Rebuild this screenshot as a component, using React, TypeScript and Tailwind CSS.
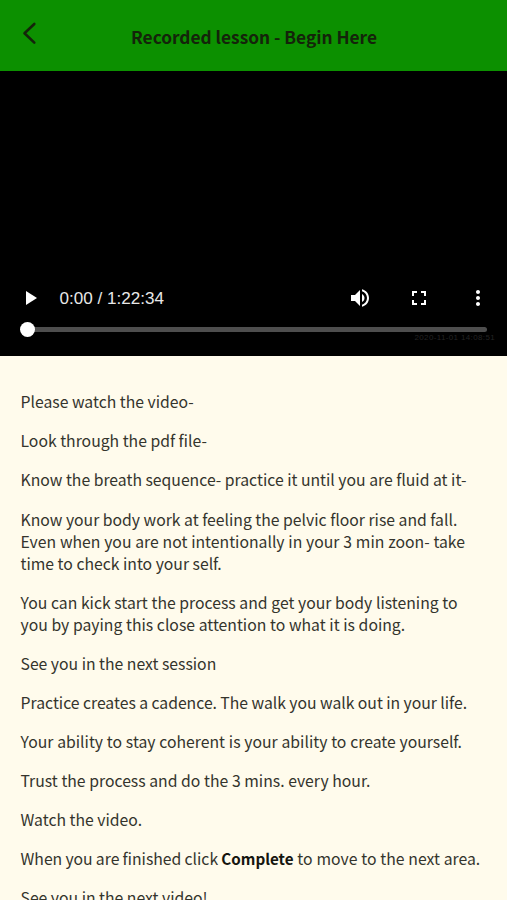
import type { ReactNode } from "react";

const paragraphs: ReactNode[] = [
  "Please watch the video-",
  "Look through the pdf file-",
  "Know the breath sequence- practice it until you are fluid at it-",
  <>
    Know your body work at feeling the pelvic floor rise and fall.
    <br />
    <span className="[word-spacing:0.27px]">Even when you are not intentionally in your 3 min zoon- take</span>
    <br />
    time to check into your self.
  </>,
  <span className="[word-spacing:0.13px]">
    You can kick start the process and get your body listening to
    <br />
    you by paying this close attention to what it is doing.
  </span>,
  "See you in the next session",
  <span className="[word-spacing:-0.15px]">Practice creates a cadence. The walk you walk out in your life.</span>,
  <span className="[word-spacing:0.27px]">Your ability to stay coherent is your ability to create yourself.</span>,
  <span className="[word-spacing:0.1px]">Trust the process and do the 3 mins. every hour.</span>,
  "Watch the video.",
  <>
    <span className="[word-spacing:-0.35px]">When you are finished click </span>
    <strong className="text-[15.2px] leading-none font-bold text-[#15150f]">Complete</strong>
    <span className="[word-spacing:0.3px]"> to move to the next area.</span>
  </>,
  "See you in the next video!",
];

const Header = () => (
  <header className="grid h-[71.4px] shrink-0 grid-cols-[60px_1fr_60px] items-center bg-[#0c9000] text-[#14240a]">
    <button aria-label="Back" className="mb-1 pl-[21px]">
      <svg width="16" height="24" viewBox="0 0 16 24" fill="none" stroke="currentColor" strokeWidth="2.6" strokeLinecap="round" strokeLinejoin="round">
        <path d="M13.3 2 3.5 11.3l9.8 9.3" />
      </svg>
    </button>
    <h1 className="pt-[2px] pl-px text-center text-[17.3px] leading-6 font-bold whitespace-nowrap">
      Recorded lesson - Begin Here
    </h1>
  </header>
);

const VideoPlayer = () => (
  <section className="relative flex h-[285px] shrink-0 flex-col justify-end bg-black pb-[19px] text-white">
    <div className="flex h-8 items-center pr-[17px] pl-[18px]">
      <button aria-label="Play">
        <svg width="24" height="24" viewBox="0 0 24 24" fill="currentColor">
          <path d="M8 5v14l11-7z" />
        </svg>
      </button>
      <span className="ml-[17.5px] pt-[2px] font-['Liberation_Sans',Arial,sans-serif] text-[17.1px] leading-5 text-[#e8e8e8]">
        0:00 / 1:22:34
      </span>
      <div className="ml-auto flex gap-[35px]">
        <button aria-label="Mute">
          <svg width="24" height="24" viewBox="0 0 24 24" fill="currentColor">
            <path d="M3 9v6h4l5 5V4L7 9H3zm13.5 3c0-1.77-1.02-3.29-2.5-4.03v8.05c1.48-.73 2.5-2.25 2.5-4.02zM14 3.23v2.06c2.89.86 5 3.54 5 6.71s-2.11 5.85-5 6.71v2.06c4.01-.91 7-4.49 7-8.77s-2.99-7.86-7-8.77z" />
          </svg>
        </button>
        <button aria-label="Full screen">
          <svg width="24" height="24" viewBox="0 0 24 24" fill="currentColor">
            <path d="M7 14H5v5h5v-2H7v-3zm-2-4h2V7h3V5H5v5zm12 7h-3v2h5v-5h-2v3zM14 5v2h3v3h2V5h-5z" />
          </svg>
        </button>
        <button aria-label="More options">
          <svg width="24" height="24" viewBox="0 0 24 24" fill="currentColor">
            <path d="M12 8c1.1 0 2-.9 2-2s-.9-2-2-2-2 .9-2 2 .9 2 2 2zm0 2c-1.1 0-2 .9-2 2s.9 2 2 2 2-.9 2-2-.9-2-2-2zm0 6c-1.1 0-2 .9-2 2s.9 2 2 2 2-.9 2-2-.9-2-2-2z" />
          </svg>
        </button>
      </div>
    </div>
    <div className="mx-5 mt-2 flex h-[15px] items-center">
      <div className="z-10 size-[15px] shrink-0 rounded-full bg-white" />
      <div className="-ml-1 h-[5px] flex-1 rounded-r-full bg-[#4e4e4e]" />
    </div>
    <span className="absolute right-[12px] bottom-[13px] font-['Liberation_Sans',Arial,sans-serif] text-[8px] leading-[10px] tracking-[0.36px] text-[#242424]">
      2020-11-01 14:08:51
    </span>
  </section>
);

export default function App() {
  return (
    <main className="flex h-screen flex-col overflow-hidden bg-[#fffbec] font-['Noto_Sans_CJK_SC',sans-serif]">
      <Header />
      <VideoPlayer />
      <article className="space-y-[17.05px] px-[20.5px] pt-[35px] text-[15.75px] leading-[22px] whitespace-nowrap text-[#34342c]">
        {paragraphs.map((text, i) => (
          <p key={i}>{text}</p>
        ))}
      </article>
    </main>
  );
}
